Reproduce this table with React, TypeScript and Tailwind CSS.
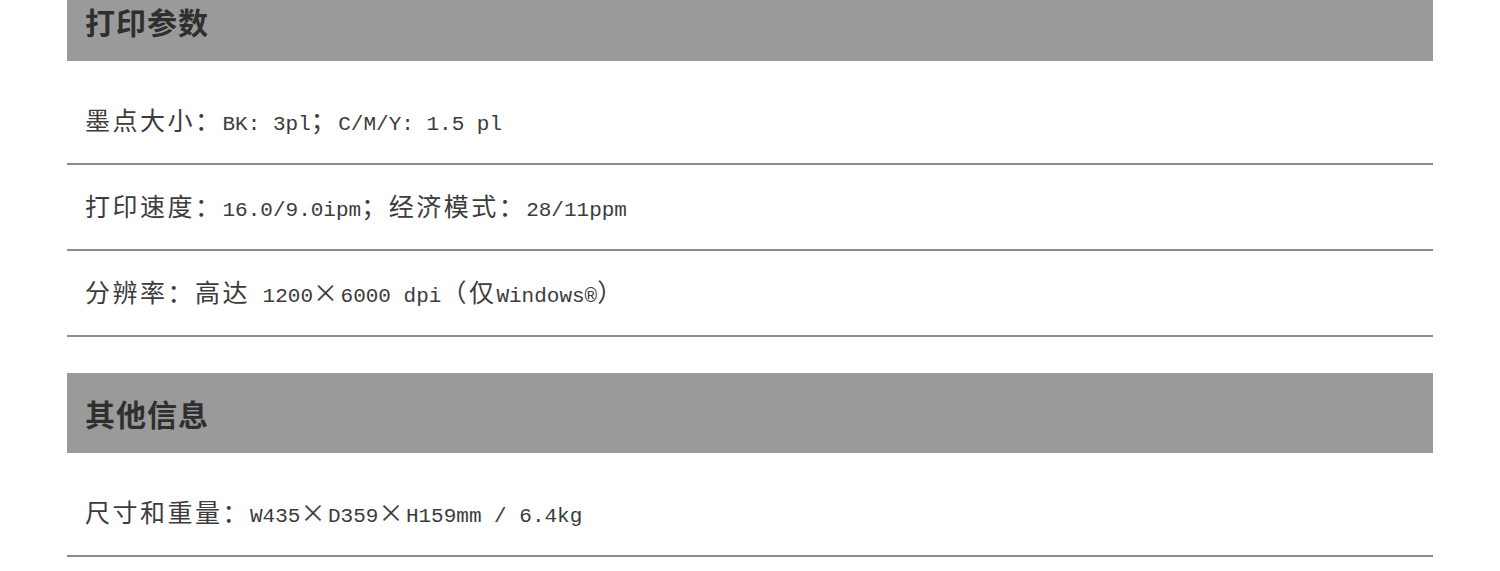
import React from "react";

const CJK = /([\u00d7\u3000-\u303f\u4e00-\u9fff\uff00-\uffef]+)/;

function Mixed({ text }: { text: string }) {
  const parts = text.split(CJK).filter((p) => p.length > 0);
  return (
    <span className="whitespace-pre">
      {parts.map((p, i) =>
        CJK.test(p) ? (
          <span
            key={i}
            className="text-[25px] tracking-[2.5px] font-['Noto_Sans_CJK_SC',sans-serif] text-[#3c3c3c]"
          >
            {p}
          </span>
        ) : (
          <span
            key={i}
            className="text-[21px] font-['Liberation_Mono','Noto_Sans_CJK_SC',monospace] text-[#3c3c3c]"
          >
            {p}
          </span>
        )
      )}
    </span>
  );
}

function Header({ title, first }: { title: string; first?: boolean }) {
  return (
    <div
      className={
        first
          ? "-mt-[19px] h-[80px] bg-[#9a9a9a] flex items-center pl-[18px]"
          : "mt-[36px] h-[80px] bg-[#9a9a9a] flex items-center pl-[18px]"
      }
    >
      <span className="text-[30px] tracking-[1px] font-bold leading-none text-[#2f2f2f] font-['Noto_Sans_CJK_SC',sans-serif]">
        {title}
      </span>
    </div>
  );
}

function Row({ text }: { text: string }) {
  return (
    <div className="h-[86px] border-b-2 border-[#8c8c8c] flex items-center pl-[18px] leading-none">
      <Mixed text={text} />
    </div>
  );
}

export default function App() {
  return (
    <div className="w-[1500px] h-[571px] overflow-hidden bg-white">
      <div className="mx-auto w-[1366px]">
        <Header title="打印参数" first />
        <div className="pt-[18px]">
          <Row text="墨点大小：BK: 3pl；C/M/Y: 1.5 pl" />
          <Row text="打印速度：16.0/9.0ipm；经济模式：28/11ppm" />
          <Row text="分辨率：高达 1200×6000 dpi（仅Windows®）" />
        </div>
        <Header title="其他信息" />
        <div className="pt-[18px]">
          <Row text="尺寸和重量：W435×D359×H159mm / 6.4kg" />
        </div>
      </div>
    </div>
  );
}
